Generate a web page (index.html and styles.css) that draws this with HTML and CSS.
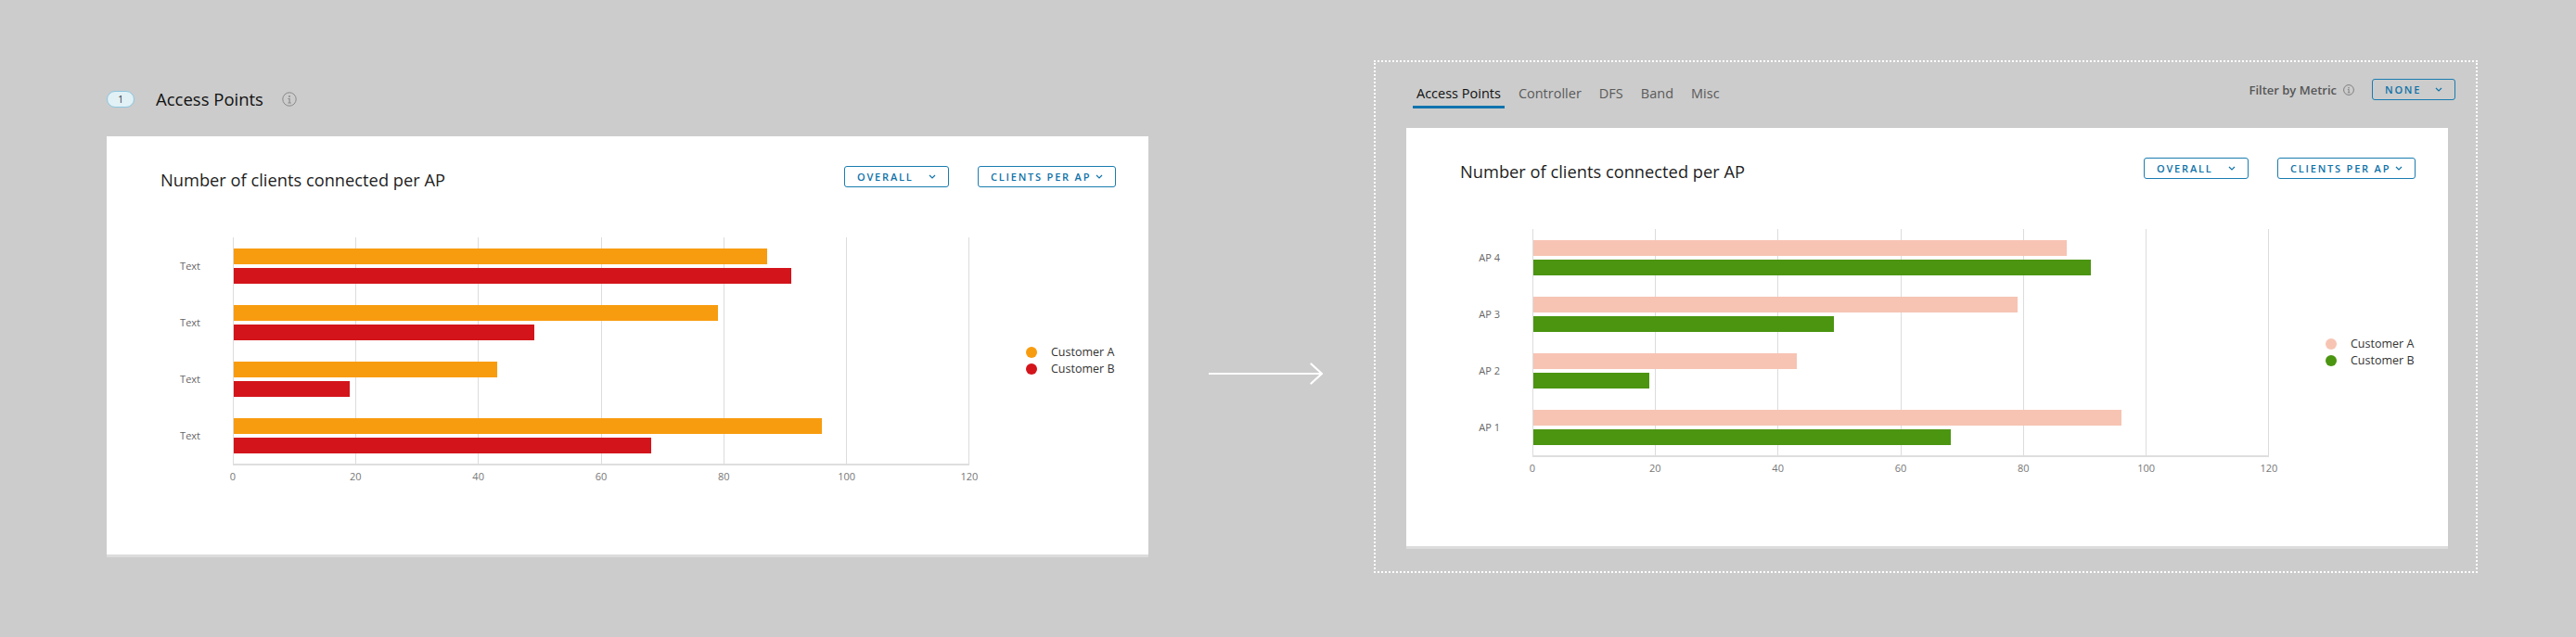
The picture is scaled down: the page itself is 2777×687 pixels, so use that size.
FILE: index.html
```html
<!DOCTYPE html>
<html lang="en">
<head>
<meta charset="utf-8">
<title>Access Points chart</title>
<link rel="stylesheet" href="styles.css">
</head>
<body>
<div class="page">

  <section class="col-left">
    <div class="section-head">
      <span class="badge">1</span>
      <h2 class="section-title">Access Points</h2>
      <svg class="info" viewBox="0 0 16 16"><circle cx="8" cy="8" r="7.2" fill="none" stroke="currentColor" stroke-width="1"/><circle cx="8" cy="4.9" r="1" fill="currentColor"/><path d="M6.4 6.9h2.3v4.5h1.1v1h-3.4v-1h1.1v-3.5h-1.1z" fill="currentColor"/></svg>
    </div>

    <div class="card">
      <div class="card-head">
        <h3 class="card-title">Number of clients connected per AP</h3>
        <div class="card-actions">
          <button class="btn btn-overall"><span>OVERALL</span><svg class="chev" viewBox="0 0 8 5"><path d="M1 1l3 3 3-3" fill="none" stroke="currentColor" stroke-width="1.2"/></svg></button>
          <button class="btn btn-clients"><span>CLIENTS PER AP</span><svg class="chev" viewBox="0 0 8 5"><path d="M1 1l3 3 3-3" fill="none" stroke="currentColor" stroke-width="1.2"/></svg></button>
        </div>
      </div>
      <div class="chart">
        <div class="chart-main">
          <div class="y-labels">
            <div class="y-label">Text</div>
            <div class="y-label">Text</div>
            <div class="y-label">Text</div>
            <div class="y-label">Text</div>
          </div>
          <div class="plot">
            <div class="gridlines"><i></i><i></i><i></i><i></i><i></i><i></i></div>
            <div class="groups">
              <div class="group"><div class="bar orange" style="width:72.5%"></div><div class="bar red" style="width:75.8%"></div></div>
              <div class="group"><div class="bar orange" style="width:65.8%"></div><div class="bar red" style="width:40.8%"></div></div>
              <div class="group"><div class="bar orange" style="width:35.8%"></div><div class="bar red" style="width:15.8%"></div></div>
              <div class="group"><div class="bar orange" style="width:80%"></div><div class="bar red" style="width:56.7%"></div></div>
            </div>
          </div>
          <div class="x-labels"><span>0</span><span>20</span><span>40</span><span>60</span><span>80</span><span>100</span><span>120</span></div>
        </div>
        <div class="legend">
          <div class="legend-item"><span class="dot orange"></span>Customer A</div>
          <div class="legend-item"><span class="dot red"></span>Customer B</div>
        </div>
      </div>
    </div>
  </section>

  <svg class="arrow" viewBox="0 0 125 24"><path d="M0 12H122" stroke="#fff" stroke-width="2.2" fill="none"/><path d="M110.5 1.5L122 12 110.5 22.5" stroke="#fff" stroke-width="2.2" fill="none" stroke-linecap="round" stroke-linejoin="round"/></svg>

  <section class="col-right">
    <div class="tabs-head">
      <nav class="tabs">
        <span class="tab active">Access Points</span>
        <span class="tab">Controller</span>
        <span class="tab">DFS</span>
        <span class="tab">Band</span>
        <span class="tab">Misc</span>
      </nav>
      <div class="filter">
        <span class="filter-label">Filter by Metric</span>
        <svg class="info-sm" viewBox="0 0 16 16"><circle cx="8" cy="8" r="7.2" fill="none" stroke="currentColor" stroke-width="1.2"/><circle cx="8" cy="4.9" r="1" fill="currentColor"/><path d="M6.4 6.9h2.3v4.5h1.1v1h-3.4v-1h1.1v-3.5h-1.1z" fill="currentColor"/></svg>
        <button class="btn btn-none"><span>NONE</span><svg class="chev" viewBox="0 0 8 5"><path d="M1 1l3 3 3-3" fill="none" stroke="currentColor" stroke-width="1.2"/></svg></button>
      </div>
    </div>

    <div class="card">
      <div class="card-head">
        <h3 class="card-title">Number of clients connected per AP</h3>
        <div class="card-actions">
          <button class="btn btn-overall"><span>OVERALL</span><svg class="chev" viewBox="0 0 8 5"><path d="M1 1l3 3 3-3" fill="none" stroke="currentColor" stroke-width="1.2"/></svg></button>
          <button class="btn btn-clients"><span>CLIENTS PER AP</span><svg class="chev" viewBox="0 0 8 5"><path d="M1 1l3 3 3-3" fill="none" stroke="currentColor" stroke-width="1.2"/></svg></button>
        </div>
      </div>
      <div class="chart">
        <div class="chart-main">
          <div class="y-labels">
            <div class="y-label">AP 4</div>
            <div class="y-label">AP 3</div>
            <div class="y-label">AP 2</div>
            <div class="y-label">AP 1</div>
          </div>
          <div class="plot">
            <div class="gridlines"><i></i><i></i><i></i><i></i><i></i><i></i></div>
            <div class="groups">
              <div class="group"><div class="bar pink" style="width:72.5%"></div><div class="bar green" style="width:75.8%"></div></div>
              <div class="group"><div class="bar pink" style="width:65.8%"></div><div class="bar green" style="width:40.8%"></div></div>
              <div class="group"><div class="bar pink" style="width:35.8%"></div><div class="bar green" style="width:15.8%"></div></div>
              <div class="group"><div class="bar pink" style="width:80%"></div><div class="bar green" style="width:56.7%"></div></div>
            </div>
          </div>
          <div class="x-labels"><span>0</span><span>20</span><span>40</span><span>60</span><span>80</span><span>100</span><span>120</span></div>
        </div>
        <div class="legend">
          <div class="legend-item"><span class="dot pink"></span>Customer A</div>
          <div class="legend-item"><span class="dot green"></span>Customer B</div>
        </div>
      </div>
    </div>
  </section>

</div>
</body>
</html>
```

FILE: styles.css
```css
html, body {
  margin: 0;
  padding: 0;
}

body {
  background: #cccccc;
  font-family: "Open Sans", "Noto Sans", sans-serif;
  color: #222;
}

.page {
  display: flex;
  align-items: flex-start;
  width: 2777px;
  height: 687px;
  box-sizing: border-box;
  padding-left: 115px;
  overflow: hidden;
}

/* ---------- left column ---------- */
.col-left {
  margin-top: 97px;
  width: 1123px;
  flex: none;
}

.section-head {
  display: flex;
  align-items: center;
  height: 20px;
  margin-bottom: 30px;
}

.badge {
  width: 30px;
  height: 18px;
  box-sizing: border-box;
  border: 1px solid #8cc6df;
  background: #e1f1f6;
  border-radius: 9px;
  font-size: 10px;
  line-height: 16px;
  text-align: center;
  color: #333;
}

.section-title {
  margin: 0 0 0 23px;
  font-size: 18.5px;
  font-weight: 400;
  line-height: 20px;
  color: #111;
}

.info {
  display: block;
  width: 16px;
  height: 16px;
  margin-left: 20px;
  color: #8a8a8a;
}

/* ---------- card ---------- */
.card {
  width: 1123px;
  height: 451px;
  box-sizing: border-box;
  background: #fff;
  box-shadow: 0 3px 0 0 #dcdcdc;
}

.card-head {
  display: flex;
  align-items: flex-start;
  justify-content: space-between;
  height: 55px;
  box-sizing: border-box;
  padding: 32px 35px 0 58px;
}

.card-title {
  margin: 3px 0 0;
  font-size: 18.3px;
  font-weight: 400;
  line-height: 24px;
  color: #1e1e1e;
}

.card-actions {
  display: flex;
  gap: 31px;
}

.btn {
  display: flex;
  align-items: center;
  justify-content: space-between;
  height: 23px;
  box-sizing: border-box;
  padding: 0 13px;
  border: 1px solid #1a7cb0;
  border-radius: 3px;
  background: transparent;
  color: #0f72a8;
  font-family: inherit;
  font-size: 11px;
  font-weight: 600;
  letter-spacing: 1.8px;
  line-height: 21px;
}

.btn-overall { width: 113px; }
.btn-clients { width: 149px; }
.btn-none { width: 90px; }

.chev {
  display: block;
  flex: none;
  width: 8px;
  height: 5px;
}

/* ---------- chart ---------- */
.chart {
  display: flex;
  align-items: center;
  margin-top: 54px;
}

.chart-main {
  display: grid;
  grid-template-columns: 101px 794px;
  column-gap: 35px;
}

.y-labels {
  display: flex;
  flex-direction: column;
}

.y-label {
  height: 61px;
  display: flex;
  align-items: center;
  justify-content: flex-end;
  font-size: 11px;
  color: #666;
}

.plot {
  display: grid;
  height: 244px;
  border-bottom: 2px solid #dedede;
}

.gridlines,
.groups {
  grid-area: 1 / 1;
}

.gridlines {
  display: flex;
}

.gridlines i {
  flex: 1;
  border-left: 1px solid #dcdcdc;
}

.gridlines i:last-child {
  border-right: 1px solid #dcdcdc;
}

.groups {
  display: flex;
  flex-direction: column;
  padding-left: 1px;
}

.group {
  height: 61px;
  display: flex;
  flex-direction: column;
  justify-content: center;
  gap: 4px;
}

.bar {
  height: 17px;
}

.x-labels {
  grid-column: 2;
  display: flex;
  justify-content: space-between;
  margin-top: 5px;
  font-size: 11px;
  line-height: 14px;
  color: #777;
}

.x-labels span {
  width: 0;
  display: flex;
  justify-content: center;
  white-space: nowrap;
}

.legend {
  display: flex;
  flex-direction: column;
  margin-left: 61px;
}

.legend-item {
  display: flex;
  align-items: center;
  height: 18px;
  font-size: 12.5px;
  color: #333;
}

.dot {
  width: 12px;
  height: 12px;
  border-radius: 50%;
  margin-right: 15px;
}

.orange { background: #f89c0f; }
.red { background: #d3141b; }
.pink { background: #f7c4b3; }
.green { background: #4b9511; }

/* ---------- arrow ---------- */
.arrow {
  flex: none;
  width: 125px;
  height: 24px;
  margin: 391px 0 0 65px;
}

/* ---------- right column ---------- */
.col-right {
  flex: none;
  width: 1190px;
  height: 553px;
  box-sizing: border-box;
  margin: 65px 0 0 53px;
  border: 2px dotted #fff;
  padding-top: 18px;
}

.tabs-head {
  display: flex;
  justify-content: space-between;
  height: 32px;
  padding: 0 22px 0 40px;
}

.tabs {
  display: flex;
  gap: 11px;
  align-self: flex-end;
}

.tab {
  padding: 0 4px 3px;
  line-height: 20px;
  font-size: 14.5px;
  color: #5a5a5a;
  border-bottom: 3px solid transparent;
}

.tab.active {
  color: #111;
  border-bottom-color: #0f74ad;
}

.filter {
  display: flex;
  align-items: center;
  align-self: flex-start;
}

.filter-label {
  font-size: 13px;
  font-weight: 600;
  color: #565656;
}

.info-sm {
  display: block;
  width: 12px;
  height: 12px;
  margin: 0 19px 0 7px;
  color: #777;
}

.col-right .card {
  margin: 21px 0 0 33px;
}
```
